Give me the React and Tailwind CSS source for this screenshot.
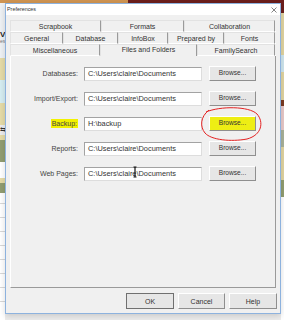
const tabRows = [
  [
    { label: 'Scrapbook', w: 'w-[91px]' },
    { label: 'Formats', w: 'w-[83px]' },
    { label: 'Collaboration', w: 'w-[91px]' },
  ],
  [
    { label: 'General', w: 'w-[53px]' },
    { label: 'Database', w: 'w-[55px]' },
    { label: 'InfoBox', w: 'w-[50px]' },
    { label: 'Prepared by', w: 'w-[56px]' },
    { label: 'Fonts', w: 'w-[51px]' },
  ],
  [
    { label: 'Miscellaneous', w: 'w-[90px]' },
    { label: 'Files and Folders', w: 'w-[97px]', selected: true },
    { label: 'FamilySearch', w: 'w-[78px]' },
  ],
];

const folders = [
  { label: 'Databases:', value: 'C:\\Users\\claire\\Documents' },
  { label: 'Import/Export:', value: 'C:\\Users\\claire\\Documents' },
  { label: 'Backup:', value: 'H:\\backup', marked: true },
  { label: 'Reports:', value: 'C:\\Users\\claire\\Documents' },
  { label: 'Web Pages:', value: 'C:\\Users\\claire\\Documents' },
];

function Tab({ label, w, selected }) {
  return (
    <div
      className={`${w} h-full flex items-center justify-center border-t border-l border-t-[#e2e2e2] border-l-[#e2e2e2] border-r border-r-[#9a9a9a] ${
        selected ? 'pb-[3px] bg-[#f0f0f0]' : 'border-b border-b-white'
      }`}
    >
      <span className="text-[7px] leading-none text-[#333] whitespace-nowrap">{label}</span>
    </div>
  );
}

function Browse({ marked }) {
  return (
    <button
      className={`ml-[7px] w-[47px] h-[15px] flex items-center justify-center text-[6.6px] leading-none text-[#333] border border-t-white border-l-white border-r-[#8f8f8f] border-b-[#8f8f8f] ${
        marked ? 'bg-[#eeee14]' : 'bg-[#e6e6e6]'
      }`}
    >
      Browse...
    </button>
  );
}

export default function App() {
  return (
    <div className="relative w-[284px] h-[320px] overflow-hidden bg-[#ececec] font-['Liberation_Sans',Arial,sans-serif]">
      {/* desktop behind the dialog */}
      <div className="flex flex-col h-full">
        <div className="flex h-[3px]">
          <div className="w-[128px] bg-[#cf9452]" />
          <div className="flex-1 bg-[#6b1e1c]" />
        </div>
        <div className="flex flex-1">
          <div className="w-[5px] flex flex-col overflow-hidden">
            <div className="h-[55px] bg-[#eef1f4] flex flex-col">
              <span className="mt-[28px] text-[8px] leading-[7px] font-bold text-[#222]">V</span>
              <span className="mt-[1px] text-[5px] leading-[5px] text-[#777]">es</span>
            </div>
            <div className="h-[22px] bg-[#e5dba7]" />
            <div className="h-[23px] bg-[#d6edf1]" />
            <div className="h-[22px] bg-[#e5dba7]" />
            <div className="h-[10px] bg-[#ececec] text-[7px] leading-[10px] text-[#333]">⇆</div>
            <div className="h-[5px] bg-[#e5dba7]" />
            <div className="h-[22px] bg-[#919d71]" />
            <div className="h-[16px] bg-white" />
            <div className="h-[5px] bg-[#e5dba7]" />
            <div className="h-[10px] bg-[#919d71]" />
            <div className="flex-1 bg-white flex flex-col pt-[10px] gap-[13px]">
              {[0, 1, 2, 3, 4, 5, 6, 7].map((i) => (
                <div key={i} className="h-px bg-[#d8d8d8]" />
              ))}
            </div>
          </div>
          <div className="flex-1" />
          <div className="w-[3px] flex flex-col">
            <div className="h-[10px] bg-[#6b1e1c]" />
            <div className="h-[42px] bg-[#e1d4a1]" />
            <div className="h-[17px] bg-[#cfe6ee]" />
            <div className="h-[28px] bg-[#e1d4a1]" />
            <div className="h-[6px] bg-[#7a3a22]" />
            <div className="h-[24px] bg-[#e8c9c9]" />
            <div className="h-[17px] bg-[#a9b29a]" />
            <div className="h-[33px] bg-[#e1d4a1]" />
            <div className="h-[17px] bg-[#919d71]" />
            <div className="flex-1 bg-white" />
          </div>
        </div>
      </div>

      {/* Preferences dialog window */}
      <div className="absolute left-[5px] top-[3px] w-[276px] border border-[#8db2de] bg-[#f0f0f0] shadow-[0_2px_6px_rgba(0,0,0,0.15)] flex flex-col">
        <div className="h-[11px] bg-white flex items-center justify-between pl-[1px] pr-[3px]">
          <span className="text-[5.4px] leading-none text-[#333]">Preferences</span>
          <svg width="6" height="6" viewBox="0 0 6 6" stroke="#666" strokeWidth="0.8">
            <line x1="0.5" y1="0.5" x2="5.5" y2="5.5" />
            <line x1="5.5" y1="0.5" x2="0.5" y2="5.5" />
          </svg>
        </div>

        <div className="mt-[5px] px-[4px] flex flex-col">
          {tabRows.map((row, i) => (
            <div key={i} className="flex h-[12px]">
              {row.map((t) => (
                <Tab key={t.label} {...t} />
              ))}
              <div className="flex-1 border-b border-b-white" />
            </div>
          ))}

          <div className="h-[232px] border-l border-l-white border-r border-b border-r-[#9a9a9a] border-b-[#9a9a9a] pt-[10px] flex flex-col gap-[10px]">
            {folders.map((f) => (
              <div key={f.label} className="flex items-center h-[15px]">
                <div className="w-[67px] flex justify-end">
                  <span
                    className={`text-[7px] leading-[9px] text-[#444] ${f.marked ? 'bg-[#f2f200] px-[1px]' : ''}`}
                  >
                    {f.label}
                  </span>
                </div>
                <div className="ml-[6px] w-[118px] h-[14px] bg-white border border-t-[#a3a3a3] border-l-[#a3a3a3] border-r-[#dddddd] border-b-[#dddddd] pl-[3px] pt-[1px] text-[7.4px] leading-[9px] text-[#333] whitespace-nowrap overflow-hidden">
                  {f.value}
                </div>
                <Browse marked={f.marked} />
              </div>
            ))}
          </div>
        </div>

        <div className="mt-[5px] pr-[3px] pb-[4px] flex justify-end gap-[4px]">
          <button className="w-[48px] h-[16px] bg-[#e6e6e6] border border-[#707070] text-[7px] leading-none text-[#333]">
            OK
          </button>
          <button className="w-[47px] h-[16px] bg-[#e6e6e6] border border-t-white border-l-white border-r-[#8f8f8f] border-b-[#8f8f8f] text-[7px] leading-none text-[#333]">
            Cancel
          </button>
          <button className="w-[48px] h-[16px] bg-[#e6e6e6] border border-t-white border-l-white border-r-[#8f8f8f] border-b-[#8f8f8f] text-[7px] leading-none text-[#333]">
            Help
          </button>
        </div>
      </div>

      {/* hand-drawn marks over the screenshot */}
      <svg className="absolute left-0 top-0 pointer-events-none" width="284" height="320" viewBox="0 0 284 320" fill="none">
        <path
          d="M206 112 C220 106 249 106 257 114 C264 122 262 135 247 139 C231 142 211 140 205 133 C200 127 200 117 209 110"
          stroke="#e42121"
          strokeWidth="1"
        />
        <path d="M135 167 V177 M133.5 167 H136.5 M133.5 177 H136.5" stroke="#111" strokeWidth="1.2" />
      </svg>
    </div>
  );
}
